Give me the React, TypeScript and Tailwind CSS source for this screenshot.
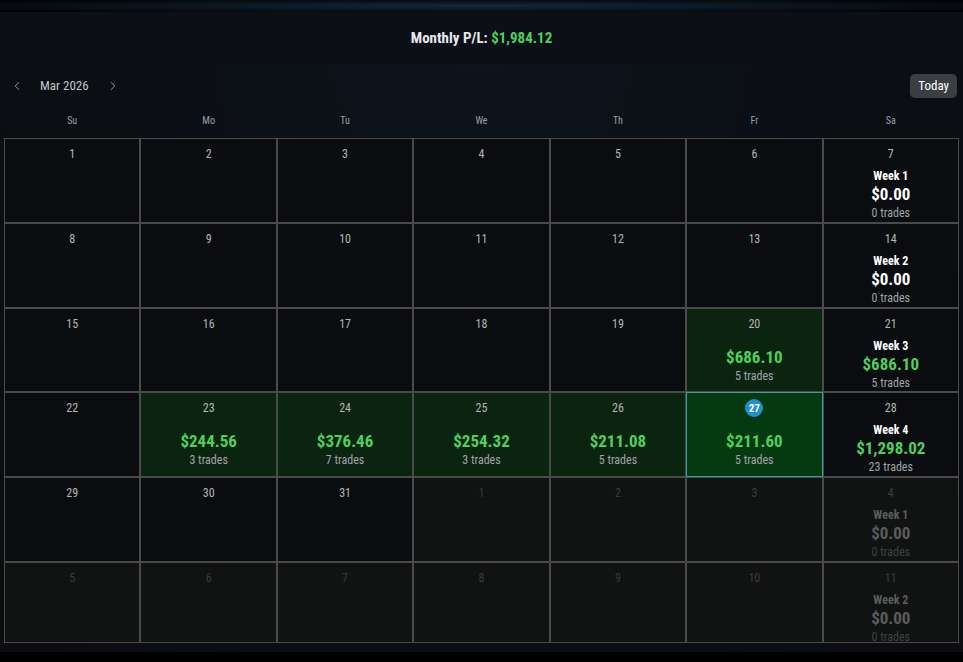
import { ChevronLeft, ChevronRight } from "lucide-react";

// ─── Data ────────────────────────────────────────────────────────────────────

type Cell = {
  day: number;
  outside?: boolean;
  today?: boolean;
  pnl?: string;
  trades?: number;
  week?: { label: string; pnl: string; trades: number; positive: boolean };
};

const weekdays = ["Su", "Mo", "Tu", "We", "Th", "Fr", "Sa"];

const rows: Cell[][] = [
  [
    { day: 1 }, { day: 2 }, { day: 3 }, { day: 4 }, { day: 5 }, { day: 6 },
    { day: 7, week: { label: "Week 1", pnl: "$0.00", trades: 0, positive: false } },
  ],
  [
    { day: 8 }, { day: 9 }, { day: 10 }, { day: 11 }, { day: 12 }, { day: 13 },
    { day: 14, week: { label: "Week 2", pnl: "$0.00", trades: 0, positive: false } },
  ],
  [
    { day: 15 }, { day: 16 }, { day: 17 }, { day: 18 }, { day: 19 },
    { day: 20, pnl: "$686.10", trades: 5 },
    { day: 21, week: { label: "Week 3", pnl: "$686.10", trades: 5, positive: true } },
  ],
  [
    { day: 22 },
    { day: 23, pnl: "$244.56", trades: 3 },
    { day: 24, pnl: "$376.46", trades: 7 },
    { day: 25, pnl: "$254.32", trades: 3 },
    { day: 26, pnl: "$211.08", trades: 5 },
    { day: 27, pnl: "$211.60", trades: 5, today: true },
    { day: 28, week: { label: "Week 4", pnl: "$1,298.02", trades: 23, positive: true } },
  ],
  [
    { day: 29 }, { day: 30 }, { day: 31 },
    { day: 1, outside: true }, { day: 2, outside: true }, { day: 3, outside: true },
    { day: 4, outside: true, week: { label: "Week 1", pnl: "$0.00", trades: 0, positive: false } },
  ],
  [
    { day: 5, outside: true }, { day: 6, outside: true }, { day: 7, outside: true },
    { day: 8, outside: true }, { day: 9, outside: true }, { day: 10, outside: true },
    { day: 11, outside: true, week: { label: "Week 2", pnl: "$0.00", trades: 0, positive: false } },
  ],
];

const font = {
  fontFamily:
    '"Roboto Condensed", "Liberation Sans Narrow", "DejaVu Sans Condensed", Roboto, sans-serif',
};

// ─── Cell ────────────────────────────────────────────────────────────────────

function DayCell({ cell }: { cell: Cell }) {
  const bg = cell.outside
    ? "bg-[#111313]"
    : cell.today
    ? "bg-[#053a11]"
    : cell.pnl
    ? "bg-[#0a2410]"
    : "bg-[#0a0c10]";
  const border = cell.today ? "border-[#3f9aa5]" : "border-[#4a4a4a]";

  return (
    <div className={`flex flex-col items-center border ${border} ${bg} pt-[6px]`}>
      {cell.today ? (
        <span className="flex h-[18px] w-[18px] items-center justify-center rounded-full bg-[#1e8fd0] text-[11px] font-bold leading-none text-white">
          {cell.day}
        </span>
      ) : (
        <span
          className={`h-[18px] text-[12px] leading-[18px] ${
            cell.outside ? "text-[#3a3c3c]" : "text-[#b5b5b5]"
          }`}
        >
          {cell.day}
        </span>
      )}

      {cell.pnl && (
        <div className="mt-[13px] flex flex-col items-center">
          <span className="text-[17px] font-bold leading-[22px] text-[#4fd05e]">
            {cell.pnl}
          </span>
          <span className="text-[12px] leading-[16px] text-[#a0a4a8]">
            {cell.trades} trades
          </span>
        </div>
      )}

      {cell.week && (
        <div className="mt-[5px] flex flex-col items-center">
          <span
            className={`text-[12px] font-bold leading-[16px] ${
              cell.outside ? "text-[#5b5d5d]" : "text-white"
            }`}
          >
            {cell.week.label}
          </span>
          <span
            className={`text-[17px] font-bold leading-[21px] ${
              cell.outside
                ? "text-[#5b5d5d]"
                : cell.week.positive
                ? "text-[#4fd05e]"
                : "text-white"
            }`}
          >
            {cell.week.pnl}
          </span>
          <span
            className={`text-[12px] leading-[16px] ${
              cell.outside ? "text-[#3f4141]" : "text-[#a0a4a8]"
            }`}
          >
            {cell.week.trades} trades
          </span>
        </div>
      )}
    </div>
  );
}

// ─── App ─────────────────────────────────────────────────────────────────────

export default function App() {
  return (
    <div className="flex h-[662px] w-full flex-col overflow-hidden bg-black" style={font}>
      {/* top glow strip */}
      <div className="h-[12px] bg-[radial-gradient(ellipse_at_center,#14283a_0%,#0b1520_45%,#000000_100%)]" />

      <div className="flex flex-1 flex-col bg-[radial-gradient(ellipse_at_top,#0d141c_0%,#0b0e13_60%,#0a0c10_100%)]">
        {/* Monthly total */}
        <div className="flex h-[52px] items-center justify-center bg-[#0c1016]">
          <span className="text-[15px] font-bold text-[#e8eaee]">
            Monthly P/L: <span className="text-[#4fd05e]">$1,984.12</span>
          </span>
        </div>

        {/* Nav row */}
        <div className="mt-[10px] flex h-[24px] items-center justify-between pl-[10px] pr-[6px]">
          <div className="flex items-center text-[#a9adb3]">
            <ChevronLeft size={14} strokeWidth={1.5} />
            <span className="ml-[16px] text-[13px] text-[#c3c6ca]">Mar 2026</span>
            <ChevronRight size={14} strokeWidth={1.5} className="ml-[17px]" />
          </div>
          <button className="h-[24px] rounded-[5px] bg-[#3b3e43] px-[8px] text-[13px] text-white">
            Today
          </button>
        </div>

        {/* Weekdays */}
        <div className="mx-[4px] mt-[13px] grid h-[18px] grid-cols-7 items-center">
          {weekdays.map((d) => (
            <span key={d} className="text-center text-[10px] text-[#9aa0a6]">
              {d}
            </span>
          ))}
        </div>

        {/* Grid */}
        <div className="mx-[4px] mt-[9px] grid grid-cols-7 grid-rows-[85px_85px_84px_85px_85px_81px]">
          {rows.flat().map((c, i) => (
            <DayCell key={i} cell={c} />
          ))}
        </div>

        <div className="mt-[9px] flex-1 bg-black" />
      </div>
    </div>
  );
}
